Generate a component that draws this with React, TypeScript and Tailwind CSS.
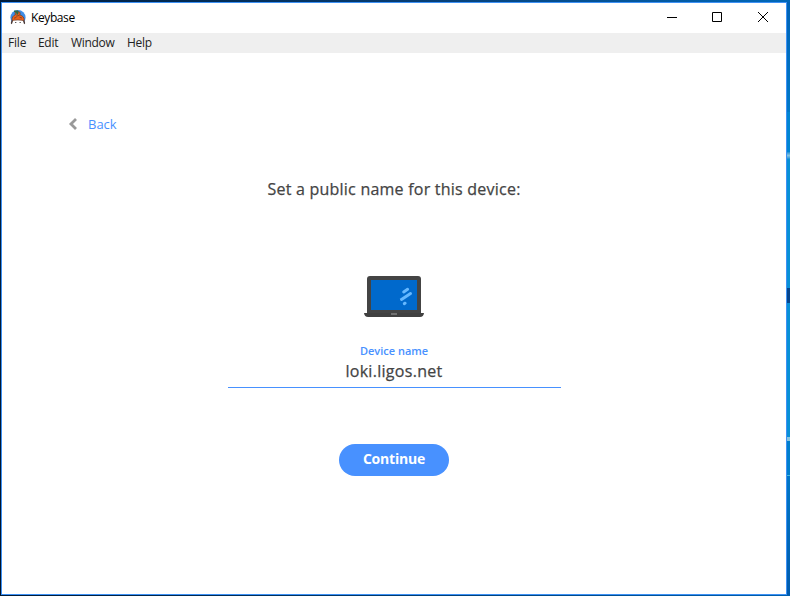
const OPEN_SANS = "font-['Open_Sans','Noto_Sans',sans-serif]";

function KeybaseLogo() {
  return (
    <svg className="block h-4 w-4" viewBox="0 0 16 16">
      <circle cx="8" cy="7.6" r="7.6" fill="#3f8ee8" />
      <path d="M2 15V10.4L4 8.8H12L14 10.4V15L13 16H3Z" fill="#fff" />
      <path d="M.9 13.6C.8 12 1.4 10.6 2.6 9.6L3 11L1.9 14.2ZM15.1 13.6C15.2 12 14.6 10.6 13.4 9.6L13 11L14.1 14.2Z" fill="#4a3a38" />
      <path d="M2 10.6C1.6 7.4 3.4 5.4 5.4 4.7C4.8 3 5.4 1.4 7 1.1L9.6 2C10.6 3 10.2 4.2 9.8 4.9C12.6 5.5 14.6 7.6 14.1 10.8C10.5 9.8 5.6 9.8 2 10.6Z" fill="#e8601c" stroke="#5a3528" strokeWidth=".6" />
      <path d="M4 .4L8 .6L8.6 3L7 5.2L6 2.6L4 2Z" fill="#2d6a48" />
      <path d="M6.2 6.2L9.6 5.3M4 8.2L6.4 7.4M9.5 7.2L12 8" stroke="#71402b" strokeWidth=".8" />
      <path d="M5.2 12.5H6.3M9.6 12.5H10.7" stroke="#333" strokeWidth="1" />
    </svg>
  );
}

function Laptop() {
  return (
    <svg className="block h-[41px] w-[60px]" viewBox="0 0 60 41">
      <path d="M3 37V3Q3 0 6 0H54Q57 0 57 3V37Z" fill="#444" />
      <path d="M7 4H53V34H7Z" fill="#0069cc" />
      <path d="M0 37H60Q59.5 41 56 41H4Q.5 41 0 37Z" fill="#404040" />
      <rect x="27" y="37" width="6" height="2" fill="#707070" />
      <g stroke="#66b8ff" strokeWidth="3" strokeLinecap="round">
        <path d="M39.7 15.9L43.6 13.3" />
        <path d="M37.5 23.5L46.5 17.5" />
        <path d="M40.3 27.6L41.1 27.2" />
      </g>
    </svg>
  );
}

function TitleBar() {
  return (
    <header className="flex h-[30px] shrink-0 items-start bg-white pl-2">
      <div className="pt-[7px]"><KeybaseLogo /></div>
      <span className="ml-[5px] mt-[5px] text-[12px] leading-5 tracking-[-0.4px] text-black">Keybase</span>
      <svg className="ml-auto mr-[17px] mt-2 block h-3 w-[102px]" viewBox="0 0 102 12" fill="none" stroke="#000">
        <path d="M0 6.5H10" />
        <path d="M45.5 1.5H54.5V10.5H45.5Z" />
        <path d="M91 1L101 11M101 1L91 11" />
      </svg>
    </header>
  );
}

function MenuBar() {
  return (
    <nav className="flex h-5 shrink-0 bg-[#efefef] pl-[6px] text-[12px] leading-5 text-[#222]">
      <span className="w-[30px] tracking-[-0.2px]">File</span>
      <span className="w-[33px] tracking-[-0.3px]">Edit</span>
      <span className="w-14 tracking-[-0.3px]">Window</span>
      <span className="tracking-[-0.3px]">Help</span>
    </nav>
  );
}

export default function App() {
  return (
    <div className={`flex h-[596px] w-[790px] flex-col overflow-hidden bg-[#002448] ${OPEN_SANS}`}>
      <div className="h-0.5 shrink-0 bg-gradient-to-r from-[#001c3b] via-[#063b70] to-[#0068b9]" />
      <div className="flex h-[593px] shrink-0">
        <div className="w-px bg-gradient-to-b from-[#002348] to-[#001329]" />
        <div className="flex w-[786px] flex-col border border-[#3d91f5] bg-white">
          <TitleBar />
          <MenuBar />
          <main className="flex flex-1 flex-col items-center">
            <button className="ml-[66px] mt-[61px] flex h-5 items-center self-start text-[13px] leading-5 text-[#4891ff]">
              <svg className="mr-2.5 block h-3 w-[10px]" viewBox="0 0 10 12" fill="none" stroke="#999" strokeWidth="2.8">
                <path d="M8 1.1L3 6L8 10.9" />
              </svg>
              Back
            </button>
            <h1 className="mt-[43px] h-6 text-[16px] font-medium leading-6 tracking-[0.23px] text-[#444] [-webkit-text-stroke:0.25px_#444]">Set a public name for this device:</h1>
            <div className="mt-[75px]"><Laptop /></div>
            <label className="mt-[26px] h-4 text-[11px] font-semibold leading-4 text-[#4891ff]">Device name</label>
            <div className="flex h-[29px] w-[333px] justify-center border-b border-[#4891ff] text-[16px] font-medium leading-6 tracking-[0.3px] text-[#444] [-webkit-text-stroke:0.25px_#444]">loki.ligos.net</div>
            <button className="mt-14 h-8 w-[110px] rounded-full bg-[#4891ff] pb-0.5 text-[14px] font-bold leading-[30px] tracking-[-0.2px] text-white">Continue</button>
          </main>
        </div>
        <div className="flex w-[3px] flex-col bg-[#0086d4]">
          <div className="h-[110px] bg-gradient-to-b from-[#0062b5] to-[#0079c8]" />
          <div className="h-10 bg-[#0085d2]" />
          <div className="h-[7px] bg-gradient-to-b from-[#0a8fd5] via-[#84c4e0] to-[#0a8fd5]" />
          <div className="h-[129px] bg-[#0890d6]" />
          <div className="h-[15px] bg-[#05458d]" />
          <div className="h-[134px] bg-[#0890d6]" />
          <div className="h-1 bg-[#88c5df]" />
          <div className="h-[34px] bg-[#007fcd]" />
          <div className="h-px bg-[#49b9dd]" />
          <div className="flex-1 bg-gradient-to-b from-[#0077c7] to-[#005bad]" />
        </div>
      </div>
      <div className="h-px bg-gradient-to-r from-[#001a36] to-[#0060b0]" />
    </div>
  );
}
